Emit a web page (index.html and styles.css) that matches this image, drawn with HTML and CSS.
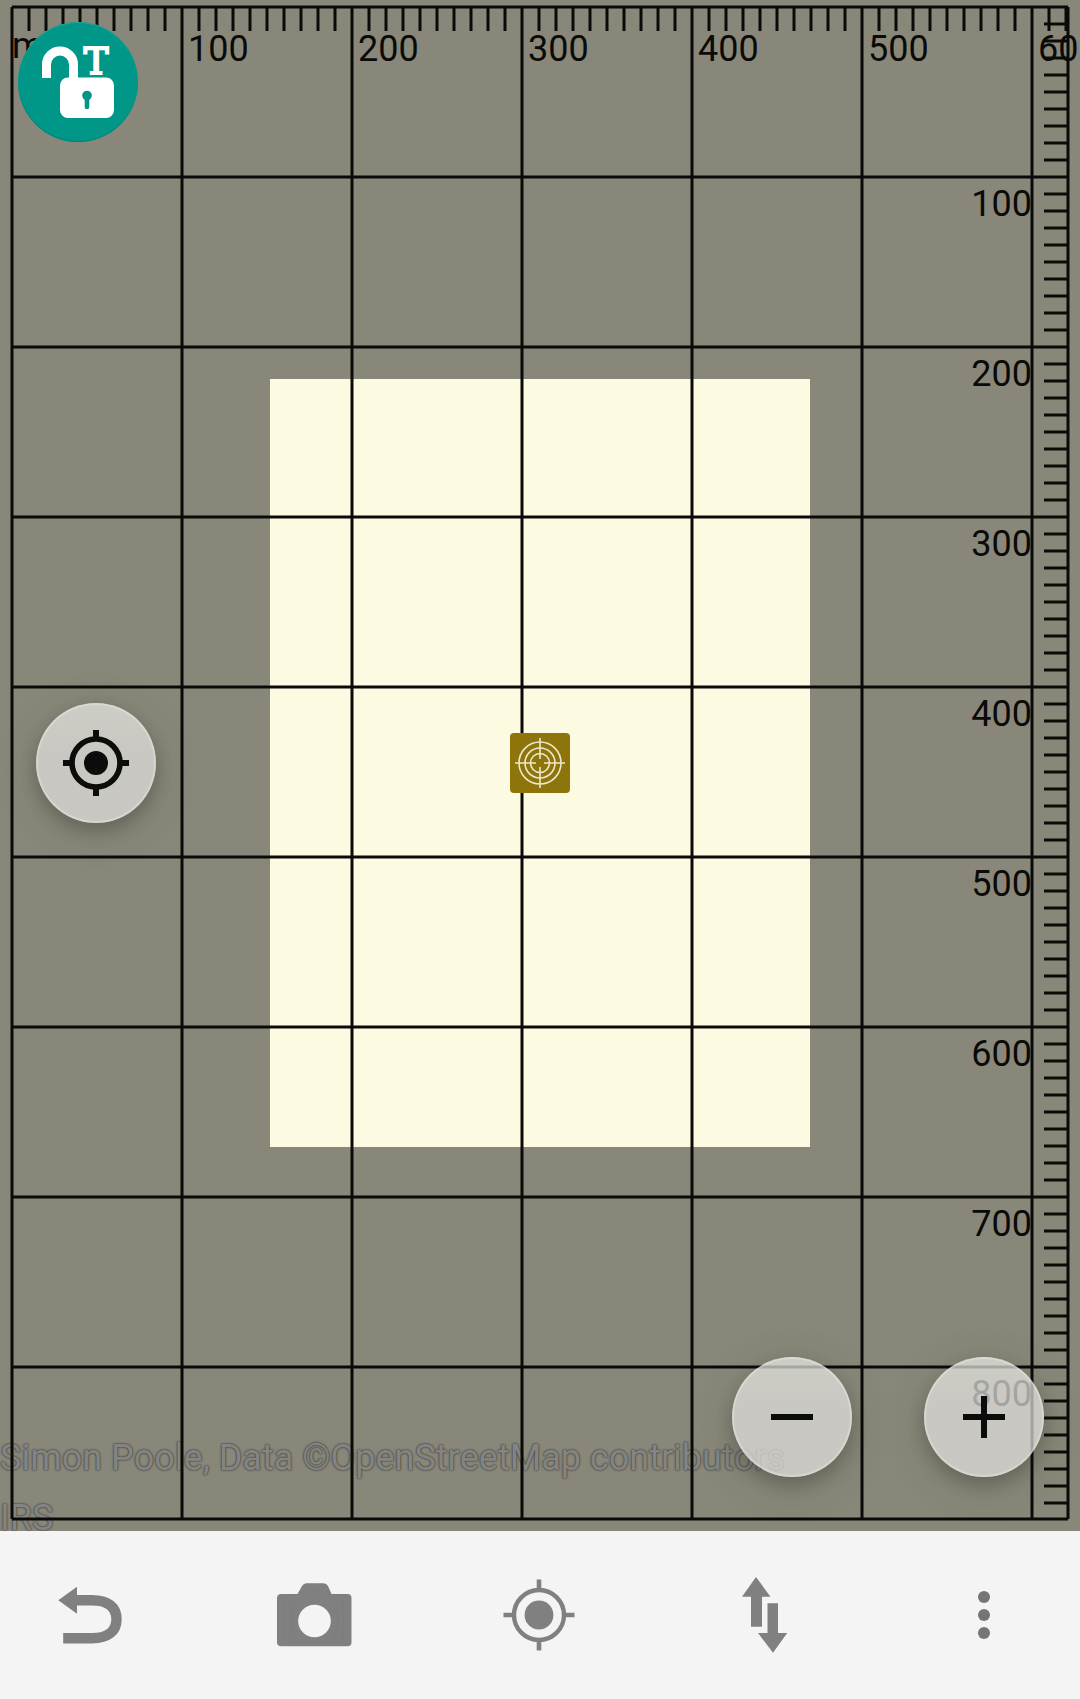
FILE: index.html
```html
<!DOCTYPE html>
<html lang="en">
<head>
<meta charset="utf-8">
<meta name="viewport" content="width=device-width, initial-scale=1">
<title>Map</title>
<link rel="stylesheet" href="styles.css">
</head>
<body>
<main class="map">
  <div class="map-center"><div class="data-area"></div></div>
  <div class="attribution">
    <p>Simon Poole, Data ©OpenStreetMap contributors</p>
    <p>IRS</p>
  </div>
  <svg class="grid" id="grid" role="img" aria-label="Scale grid in metres"></svg>
  <div class="map-center">
    <svg class="marker" viewBox="0 0 60 60" aria-hidden="true">
      <rect width="60" height="60" rx="4" fill="#8d750c"/>
      <g fill="none" stroke="#eee8cb" stroke-width="1.6">
        <circle cx="30" cy="30" r="21"/>
        <circle cx="30" cy="30" r="15"/>
        <circle cx="30" cy="30" r="9.5"/>
        <path d="M30 5V26M30 34V55M5 30H26M34 30H55"/>
      </g>
    </svg>
  </div>
  <button class="fab fab-lock" type="button" aria-label="Unlock tag editing">
    <svg viewBox="0 0 120 120" aria-hidden="true">
      <path d="M28.5 56V42.500a13.500 13.500 0 0 1 27 0V58" fill="none" stroke="#fff" stroke-width="9"/>
      <rect x="42" y="55.500" width="54" height="40.500" rx="8" fill="#fff"/>
      <circle cx="69" cy="73.5" r="4.8" fill="#009688"/>
      <path d="M69 74V85" stroke="#009688" stroke-width="4.6" stroke-linecap="round"/>
      <text class="lock-letter" x="78" y="52" text-anchor="middle">T</text>
    </svg>
  </button>
  <div class="side-controls">
    <button class="fab" type="button" aria-label="Follow position">
      <svg viewBox="0 0 120 120" aria-hidden="true">
        <circle cx="60" cy="60" r="24" fill="none" stroke="#0c0c0a" stroke-width="5.6"/>
        <circle cx="60" cy="60" r="12" fill="#0c0c0a"/>
        <path d="M60 27V35M60 85V93M27 60H35M85 60H93" stroke="#0c0c0a" stroke-width="6"/>
      </svg>
    </button>
  </div>
  <div class="zoom-controls">
    <button class="fab" type="button" aria-label="Zoom out">
      <svg viewBox="0 0 120 120" aria-hidden="true"><path d="M39 60H81" stroke="#0c0c0a" stroke-width="6"/></svg>
    </button>
    <button class="fab" type="button" aria-label="Zoom in">
      <svg viewBox="0 0 120 120" aria-hidden="true"><path d="M39 60H81M60 39V81" stroke="#0c0c0a" stroke-width="6"/></svg>
    </button>
  </div>
</main>
<nav class="toolbar" aria-label="Map actions">
  <button type="button" aria-label="Undo">
    <svg viewBox="0 0 96 96" aria-hidden="true">
      <path d="M16.3 33.3L35 19.7V46.7Z" fill="#808080"/>
      <path d="M34 33.2H50C66 33.2 74.5 40 74.5 52.2S66 71.2 50 71.2H21.2" fill="none" stroke="#808080" stroke-width="10.4"/>
    </svg>
  </button>
  <button type="button" aria-label="Take photo">
    <svg viewBox="0 0 96 96" aria-hidden="true">
      <g transform="translate(-0.5 0)">
        <path d="M15 27H31L35.500 19Q37 16.300 40 16.300H57Q60 16.300 61.500 19L65 27H81Q85 27 85 31V75.300Q85 79.300 81 79.300H15Q10.500 79.300 10.500 75.300V31Q10.500 27 15 27Z" fill="#808080"/>
        <path d="M31 71H18V35H30M66 35H77V71H64M41 24H55V28H41ZM29 39Q20 54 29 69M67 39Q76 54 67 69" fill="none" stroke="#7c7c7c" stroke-width="1"/>
        <circle cx="48" cy="54" r="16.300" fill="#f4f4f4"/>
      </g>
    </svg>
  </button>
  <button type="button" aria-label="GPS">
    <svg viewBox="0 0 96 96" aria-hidden="true">
      <circle cx="48" cy="48" r="25" fill="none" stroke="#808080" stroke-width="4.400"/>
      <circle cx="48" cy="48" r="14.400" fill="#808080"/>
      <path d="M48 12.500V23M48 73V83.500M12.500 48H23M73 48H83.500" stroke="#808080" stroke-width="4.600"/>
    </svg>
  </button>
  <button type="button" aria-label="Transfer">
    <svg viewBox="0 0 96 96" aria-hidden="true">
      <path d="M40 10L54.500 29.700H46V59.700H35V29.700H26ZM57 85.700L42 66H51.500V36.300H62V66H71.200Z" fill="#808080"/>
    </svg>
  </button>
  <button class="more" type="button" aria-label="More options">
    <svg viewBox="0 0 88 96" aria-hidden="true">
      <g fill="#757575"><circle cx="44" cy="30" r="6"/><circle cx="44" cy="48" r="6"/><circle cx="44" cy="66" r="6"/></g>
    </svg>
  </button>
</nav>
<script src="grid.js"></script>
</body>
</html>
```
FILE: styles.css
```css
* {
  box-sizing: border-box;
}

body {
  margin: 0;
  min-height: 100vh;
  display: flex;
  flex-direction: column;
  font-family: Roboto, "Liberation Sans", sans-serif;
  background: #f4f4f4;
}

.map {
  position: relative;
  flex: 1;
  overflow: hidden;
  background: #898779;
}

/* Layers stacked over the map canvas */
.map-center {
  position: absolute;
  inset: 0 0 5px;
  display: flex;
  align-items: center;
  justify-content: center;
}

.data-area {
  width: 50%;
  aspect-ratio: 45 / 64;
  background: #fcfae1;
}

.marker {
  width: 60px;
  height: 60px;
}

.grid {
  position: absolute;
  inset: 0;
  width: 100%;
  height: 100%;
  stroke: #0a0a08;
  stroke-width: 3px;
}

.grid text {
  font-size: 36px;
  fill: #0a0a08;
  stroke: none;
}

.attribution {
  position: absolute;
  left: 0;
  bottom: -17px;
  font-size: 36px;
  font-kerning: none;
  line-height: 60px;
  white-space: nowrap;
  color: #848484;
  text-shadow: 0 0 2px #44443c, 0 0 2px #44443c;
}

.attribution p {
  margin: 0;
}

.fab {
  display: block;
  width: 120px;
  height: 120px;
  padding: 0;
  border: 0;
  border-radius: 50%;
  background: linear-gradient(rgba(234, 236, 231, 0.7), rgba(228, 227, 225, 0.7) 40%);
  box-shadow: inset 0 0 0 2px rgba(255, 255, 255, 0.25), 0 8px 18px rgba(0, 0, 0, 0.2), 0 8px 40px rgba(60, 70, 50, 0.2);
}

.fab svg {
  display: block;
  width: 100%;
  height: 100%;
}

.fab-lock {
  position: absolute;
  left: 18px;
  top: 22px;
  background: #009688;
  box-shadow: inset 0 1px 1px #26a598, inset 0 -1px 1px #008579;
}

.lock-letter {
  font-family: "DejaVu Serif", serif;
  font-size: 37px;
  fill: #fff;
  stroke: #fff;
  stroke-width: 2px;
}

.side-controls {
  position: absolute;
  inset: 0 auto 5px 36px;
  display: flex;
  align-items: center;
}

.zoom-controls {
  position: absolute;
  right: 36px;
  bottom: 54px;
  display: flex;
  gap: 72px;
}

.toolbar {
  display: flex;
  align-items: center;
  justify-content: space-between;
  height: 168px;
  padding: 0 52px 0 42px;
  background: #f4f4f4;
}

.toolbar button {
  width: 96px;
  height: 96px;
  padding: 0;
  border: 0;
  background: none;
}

.toolbar .more {
  width: 88px;
}

.toolbar svg {
  display: block;
  width: 100%;
  height: 100%;
}
```
FILE: grid.js
```javascript
// Draws the metric grid with its top and right rulers over the map.
const grid = document.getElementById('grid');
const STEP = 170;
const MINOR = 17;
const TICK = 24;

function line(x1, y1, x2, y2) {
  return `<line x1="${x1}" y1="${y1}" x2="${x2}" y2="${y2}"/>`;
}

function label(x, y, text, anchor) {
  return `<text x="${x}" y="${y}" text-anchor="${anchor}">${text}</text>`;
}

function draw() {
  const left = 12;
  const top = 7;
  const right = grid.clientWidth - 12;
  const bottom = grid.clientHeight - 12;
  const lastColumn = left + Math.floor((right - left) / STEP) * STEP;
  let out = line(left, top, right, top) + line(left, bottom, right, bottom)
    + line(left, top, left, bottom) + line(right, top, right, bottom)
    + label(left, 58, 'm', 'start');

  for (let i = 1; left + i * MINOR <= right; i++) {
    const x = left + i * MINOR;
    if (i % 10) {
      out += line(x, top, x, top + TICK);
    } else {
      out += line(x, top, x, bottom) + label(x + 6, 61, i * 10, 'start');
    }
  }
  for (let i = 1; top + i * MINOR < bottom; i++) {
    const y = top + i * MINOR;
    if (i % 10) {
      out += line(right - TICK, y, right, y);
    } else {
      out += line(left, y, right, y) + label(lastColumn, y + 39, i * 10, 'end');
    }
  }
  grid.innerHTML = out;
}

draw();
window.addEventListener('resize', draw);
```
